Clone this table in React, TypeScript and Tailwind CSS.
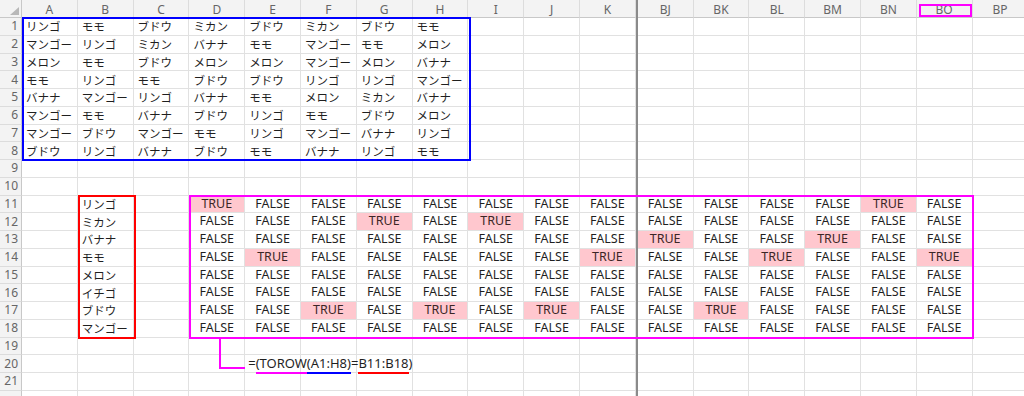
import React from "react";

const data: string[][] = [
  ["リンゴ", "モモ", "ブドウ", "ミカン", "ブドウ", "ミカン", "ブドウ", "モモ"],
  ["マンゴー", "リンゴ", "ミカン", "バナナ", "モモ", "マンゴー", "モモ", "メロン"],
  ["メロン", "モモ", "ブドウ", "メロン", "メロン", "マンゴー", "メロン", "バナナ"],
  ["モモ", "リンゴ", "モモ", "ブドウ", "ブドウ", "リンゴ", "リンゴ", "マンゴー"],
  ["バナナ", "マンゴー", "リンゴ", "バナナ", "モモ", "メロン", "ミカン", "バナナ"],
  ["マンゴー", "モモ", "バナナ", "ブドウ", "リンゴ", "モモ", "ブドウ", "メロン"],
  ["マンゴー", "ブドウ", "マンゴー", "モモ", "リンゴ", "マンゴー", "バナナ", "リンゴ"],
  ["ブドウ", "リンゴ", "バナナ", "ブドウ", "モモ", "バナナ", "リンゴ", "モモ"],
];

const fruits = ["リンゴ", "ミカン", "バナナ", "モモ", "メロン", "イチゴ", "ブドウ", "マンゴー"];

// TOROW(A1:H8) flattened by row
const flat = data.flat();

interface Col {
  name: string;
  index: number;
}

const leftCols: Col[] = ["A", "B", "C", "D", "E", "F", "G", "H", "I", "J", "K"].map((name, i) => ({
  name,
  index: i + 1,
}));
const rightCols: Col[] = ["BJ", "BK", "BL", "BM", "BN", "BO", "BP"].map((name, i) => ({
  name,
  index: 62 + i,
}));

const rows = Array.from({ length: 22 }, (_, i) => i + 1);

const Formula = () => (
  <span className="whitespace-nowrap text-[13px] leading-[15px]">
    =
    <span className="border-b-2 border-[#ff00ff]">(TOROW</span>
    <span className="border-b-2 border-[#0000ff]">(A1:H8)</span>
    =
    <span className="border-b-2 border-[#ff0000]">B11:B18</span>)
  </span>
);

const Cell: React.FC<{ row: number; col: Col }> = ({ row, col }) => {
  const base = "flex items-center border-r border-b border-[#e1e1e1] text-[#1f1f1f]";

  if (row <= 8 && col.index <= 8) {
    return <div className={`${base} pl-[4px] pt-[1px] text-[11.5px] whitespace-nowrap`}>{data[row - 1][col.index - 1]}</div>;
  }
  if (row >= 11 && row <= 18 && col.index === 2) {
    return <div className={`${base} pl-[4px] pt-[1px] text-[11.5px] whitespace-nowrap`}>{fruits[row - 11]}</div>;
  }
  if (row >= 11 && row <= 18 && col.index >= 4 && col.index <= 67) {
    const hit = flat[col.index - 4] === fruits[row - 11];
    return hit ? (
      <div className={`${base} justify-center text-[12.5px] bg-[#ffc7ce] text-[#3b2626]`}>TRUE</div>
    ) : (
      <div className={`${base} justify-center text-[12.5px]`}>FALSE</div>
    );
  }
  if (row === 20 && col.index === 5) {
    return (
      <div className={`${base} pl-[3px] overflow-visible relative z-10`}>
        <Formula />
      </div>
    );
  }
  return <div className={base} />;
};

const App: React.FC = () => {
  return (
    <div className="relative w-[1024px] h-[396px] overflow-hidden bg-white font-['Noto_Sans','Noto_Sans_CJK_JP',sans-serif]">
      <div className="grid grid-cols-[22px_repeat(11,55.8px)_2px_repeat(7,55.8px)] grid-rows-[18px_repeat(22,17.75px)]">
        {/* corner */}
        <div className="flex items-end justify-end bg-[#f3f3f3] border-r border-b border-[#c8c8c8] pr-[2px] pb-[2px]">
          <svg width="9" height="8" viewBox="0 0 9 8">
            <polygon points="9,0 9,8 0,8" fill="#b8b8b8" />
          </svg>
        </div>
        {leftCols.map((c) => (
          <div
            key={c.name}
            className="flex items-center justify-center pt-[3px] bg-[#f3f3f3] border-r border-b border-r-[#dcdcdc] border-b-[#c8c8c8] text-[12px] text-[#666]"
          >
            {c.name}
          </div>
        ))}
        <div className="bg-[#8a8a8a]" />
        {rightCols.map((c) => (
          <div
            key={c.name}
            className="flex items-center justify-center pt-[3px] bg-[#f3f3f3] border-r border-b border-r-[#dcdcdc] border-b-[#c8c8c8] text-[12px] text-[#666]"
          >
            {c.name}
          </div>
        ))}

        {rows.map((r) => (
          <React.Fragment key={r}>
            <div className="flex items-center justify-end pr-[3px] bg-[#f3f3f3] border-r border-b border-r-[#c8c8c8] border-b-[#dcdcdc] text-[12px] text-[#666]">
              {r <= 21 ? r : ""}
            </div>
            {leftCols.map((c) => (
              <Cell key={c.name} row={r} col={c} />
            ))}
            <div className="bg-[#8a8a8a]" />
            {rightCols.map((c) => (
              <Cell key={c.name} row={r} col={c} />
            ))}
          </React.Fragment>
        ))}
      </div>

      {/* range outlines */}
      <div className="absolute left-[22px] top-[17px] w-[449px] h-[144px] border-2 border-[#0000ff]" />
      <div className="absolute left-[78px] top-[195px] w-[58px] h-[144px] border-2 border-[#ff0000]" />
      <div className="absolute left-[189px] top-[195px] w-[785px] h-[144px] border-2 border-[#ff00ff]" />
      <div className="absolute left-[919px] top-[4px] w-[53px] h-[13px] border-2 border-[#ff00ff]" />
      <div className="absolute left-[219px] top-[339px] w-[26px] h-[30px] border-l-2 border-b-2 border-[#ff00ff]" />
    </div>
  );
};

export default App;
